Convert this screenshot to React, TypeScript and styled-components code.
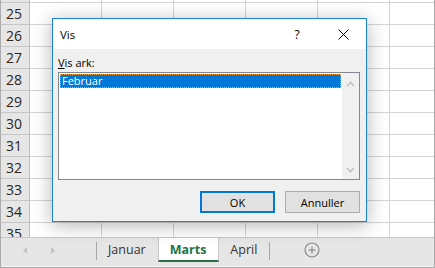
import styled, { createGlobalStyle } from "styled-components"

const GlobalStyle = createGlobalStyle`
  * { box-sizing: border-box; }
  html, body { margin: 0; padding: 0; background: #fff; }
  body { font-family: "Open Sans", "Noto Sans", sans-serif; }
`

// first row is scrolled almost out of view, so its number is not shown
const rowNumbers = [24, 25, 26, 27, 28, 29, 30, 31, 32, 33, 34, 35]
const columnCount = 6

const sheets = [
  { name: "Januar", active: false },
  { name: "Marts", active: true },
  { name: "April", active: false }
]

export default function App() {
  return (
    <>
      <GlobalStyle />
      <Frame>
        <Sheet>
          <SheetRows>
            {rowNumbers.map((n, idx) => (
              <Row key={n}>
                <RowHead>{idx === 0 ? "" : n}</RowHead>
                {Array.from({ length: columnCount }).map((_, i) => (
                  <Cell key={i} />
                ))}
              </Row>
            ))}
          </SheetRows>
        </Sheet>

        <TabBar>
          <NavArea>
            <NavButton>
              <svg width="4" height="7" viewBox="0 0 4 7">
                <polygon points="4,0 0,3.5 4,7" fill="#c3c3c3" />
              </svg>
            </NavButton>
            <NavButton>
              <svg width="4" height="7" viewBox="0 0 4 7">
                <polygon points="0,0 4,3.5 0,7" fill="#c3c3c3" />
              </svg>
            </NavButton>
          </NavArea>
          <Separator />
          {sheets.map((s) => (
            <Tab key={s.name} $active={s.active}>
              {s.name}
            </Tab>
          ))}
          <Separator />
          <AddSheet>
            <svg width="16" height="16" viewBox="0 0 16 16">
              <circle cx="8" cy="8" r="7" fill="none" stroke="#8a8a8a" strokeWidth="1.2" />
              <line x1="4.5" y1="8" x2="11.5" y2="8" stroke="#8a8a8a" strokeWidth="1.2" />
              <line x1="8" y1="4.5" x2="8" y2="11.5" stroke="#8a8a8a" strokeWidth="1.2" />
            </svg>
          </AddSheet>
        </TabBar>
        <StatusStrip />

        <Dialog>
          <TitleBar>
            <Title>Vis</Title>
            <TitleButton>?</TitleButton>
            <TitleButton>
              <svg width="11" height="11" viewBox="0 0 11 11">
                <line x1="0.5" y1="0.5" x2="10.5" y2="10.5" stroke="#000" strokeWidth="1" />
                <line x1="10.5" y1="0.5" x2="0.5" y2="10.5" stroke="#000" strokeWidth="1" />
              </svg>
            </TitleButton>
          </TitleBar>
          <Body>
            <Label>
              <u>V</u>is ark:
            </Label>
            <ListBox>
              <Items>
                <Item $selected>Februar</Item>
              </Items>
              <ScrollBar>
                <svg width="9" height="6" viewBox="0 0 9 6">
                  <polyline points="1,5 4.5,1.5 8,5" fill="none" stroke="#c2c2c2" strokeWidth="1.6" />
                </svg>
                <svg width="9" height="6" viewBox="0 0 9 6">
                  <polyline points="1,1 4.5,4.5 8,1" fill="none" stroke="#c2c2c2" strokeWidth="1.6" />
                </svg>
              </ScrollBar>
            </ListBox>
            <Buttons>
              <Button $primary>OK</Button>
              <Button>Annuller</Button>
            </Buttons>
          </Body>
        </Dialog>
      </Frame>
    </>
  )
}

const Frame = styled.div`
  position: relative;
  width: 435px;
  height: 268px;
  border: 1px solid #ababab;
  border-top: none;
  overflow: hidden;
  display: flex;
  flex-direction: column;
  background: #fff;
`

const Sheet = styled.div`
  flex: none;
  height: 237px;
  overflow: hidden;
`

const SheetRows = styled.div`
  margin-top: -19px;
`

const Row = styled.div`
  display: grid;
  grid-template-columns: 29px repeat(5, 72px) 1fr;
  height: 22px;
`

const RowHead = styled.div`
  background: #e6e6e6;
  border-right: 1px solid #bdbdbd;
  border-bottom: 1px solid #c6c6c6;
  color: #262626;
  font-size: 14px;
  display: flex;
  align-items: center;
  justify-content: center;
  padding-right: 2px;
`

const Cell = styled.div`
  border-right: 1px solid #d4d4d4;
  border-bottom: 1px solid #d4d4d4;
  &:last-child {
    border-right: none;
  }
`

const TabBar = styled.div`
  flex: none;
  height: 29px;
  border-top: 1px solid #c6c6c6;
  background: #e6e6e6;
  display: flex;
  align-items: flex-start;
`

const StatusStrip = styled.div`
  flex: none;
  height: 1px;
  background: #f3f3f3;
`

const NavArea = styled.div`
  width: 95px;
  height: 24px;
  padding-left: 10px;
  display: flex;
  align-items: center;
`

const NavButton = styled.div`
  width: 28px;
  display: flex;
  justify-content: center;
`

const Separator = styled.div`
  width: 1px;
  height: 18px;
  margin-top: 4px;
  background: #a6a6a6;
`

const Tab = styled.div<{ $active?: boolean }>`
  height: 24px;
  padding: 0 12px 0 11px;
  display: flex;
  align-items: center;
  font-size: 12.5px;
  color: ${(p) => (p.$active ? "#217346" : "#333")};
  font-weight: ${(p) => (p.$active ? 700 : 400)};
  background: ${(p) => (p.$active ? "#fff" : "transparent")};
  border-left: ${(p) => (p.$active ? "1px solid #c6c6c6" : "none")};
  border-right: ${(p) => (p.$active ? "1px solid #c6c6c6" : "none")};
  border-bottom: ${(p) => (p.$active ? "2px solid #217346" : "2px solid transparent")};
`

const AddSheet = styled.div`
  height: 24px;
  margin-left: 34px;
  display: flex;
  align-items: center;
`

const Dialog = styled.div`
  position: absolute;
  left: 51px;
  top: 18px;
  width: 315px;
  height: 204px;
  border: 1px solid #1883d7;
  background: #f0f0f0;
  box-shadow: 0 3px 18px rgba(0, 0, 0, 0.3);
  display: flex;
  flex-direction: column;
  font-size: 11px;
  color: #000;
`

const TitleBar = styled.div`
  height: 30px;
  background: #fff;
  display: flex;
  align-items: center;
`

const Title = styled.div`
  flex: 1;
  padding-left: 7px;
  font-size: 11.5px;
`

const TitleButton = styled.div`
  width: 46px;
  height: 30px;
  display: flex;
  align-items: center;
  justify-content: center;
  font-size: 12px;
`

const Body = styled.div`
  flex: 1;
  padding: 6px 6px 8px 5px;
  display: flex;
  flex-direction: column;
`

const Label = styled.div`
  height: 15px;
  line-height: 15px;
  margin-bottom: 2px;
  u {
    text-underline-offset: 1px;
  }
`

const ListBox = styled.div`
  height: 108px;
  border: 1px solid #828790;
  background: #fff;
  display: flex;
`

const Items = styled.div`
  flex: 1;
  padding: 1px;
`

const Item = styled.div<{ $selected?: boolean }>`
  height: 14px;
  line-height: 14px;
  padding-left: 2px;
  background: ${(p) => (p.$selected ? "#0078d7" : "transparent")};
  color: ${(p) => (p.$selected ? "#fff" : "#000")};
  outline: ${(p) => (p.$selected ? "1px dotted #f7a23c" : "none")};
  outline-offset: -1px;
`

const ScrollBar = styled.div`
  width: 17px;
  background: #f0f0f0;
  display: flex;
  flex-direction: column;
  justify-content: space-between;
  align-items: center;
  padding: 8px 0 6px;
`

const Buttons = styled.div`
  margin-top: 11px;
  display: flex;
  justify-content: flex-end;
  gap: 10px;
`

const Button = styled.button<{ $primary?: boolean }>`
  width: 75px;
  height: 22px;
  padding: 0;
  background: #e1e1e1;
  border: ${(p) => (p.$primary ? "2px solid #0078d7" : "1px solid #adadad")};
  border-radius: 0;
  font-family: inherit;
  font-size: 11px;
  color: #000;
`
